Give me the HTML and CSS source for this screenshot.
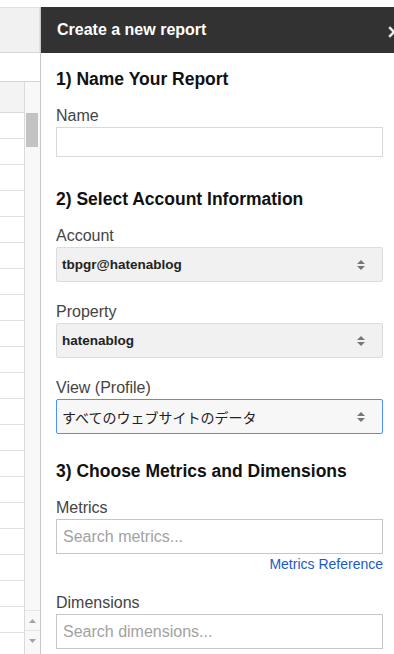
FILE: index.html
```html
<!DOCTYPE html>
<html lang="en">
<head>
  <meta charset="UTF-8">
  <meta name="viewport" content="width=device-width, initial-scale=1.0">
  <title>Create a new report</title>
  <link rel="stylesheet" href="styles.css">
</head>
<body>
  <div class="app">
    <!-- hoja de cálculo detrás del panel -->
    <div class="sheet">
      <div class="toolbar"></div>
      <div class="formula"></div>
      <div class="grid">
        <div class="cells">
          <div class="corner"></div>
          <div class="row"></div><div class="row"></div><div class="row"></div>
          <div class="row"></div><div class="row"></div><div class="row"></div>
          <div class="row"></div><div class="row"></div><div class="row"></div>
          <div class="row"></div><div class="row"></div><div class="row"></div>
          <div class="row"></div><div class="row"></div><div class="row"></div>
          <div class="row"></div><div class="row"></div><div class="row"></div>
          <div class="row"></div><div class="row"></div><div class="row"></div>
        </div>
        <div class="vscroll">
          <div class="thumb"></div>
          <div class="arrows">
            <div class="arrow">
              <svg width="7" height="4" viewBox="0 0 7 4"><polygon points="0,4 3.5,0 7,4" fill="#a3a3a3"/></svg>
            </div>
            <div class="arrow">
              <svg width="7" height="4" viewBox="0 0 7 4"><polygon points="0,0 3.5,4 7,0" fill="#a3a3a3"/></svg>
            </div>
          </div>
        </div>
      </div>
    </div>

    <!-- panel lateral -->
    <aside class="sidebar">
      <header class="sidebar-head">
        <span>Create a new report</span>
        <svg class="close" width="12" height="12" viewBox="0 0 12 12">
          <path d="M1.2 1.2 L10.8 10.8 M10.8 1.2 L1.2 10.8" stroke="#ececec" stroke-width="2.6" fill="none"/>
        </svg>
      </header>

      <div class="sidebar-body">
        <section class="section">
          <h2>1) Name Your Report</h2>
          <div class="label">Name</div>
          <input class="text-input" type="text">
        </section>

        <section class="section section-account">
          <h2>2) Select Account Information</h2>
          <div class="field">
            <div class="label">Account</div>
            <div class="select">
              <span>tbpgr@hatenablog</span>
              <svg width="8" height="10" viewBox="0 0 8 10"><polygon points="0,4 4,0 8,4" fill="#777"/><polygon points="0,6 4,10 8,6" fill="#777"/></svg>
            </div>
          </div>
          <div class="field">
            <div class="label">Property</div>
            <div class="select">
              <span>hatenablog</span>
              <svg width="8" height="10" viewBox="0 0 8 10"><polygon points="0,4 4,0 8,4" fill="#777"/><polygon points="0,6 4,10 8,6" fill="#777"/></svg>
            </div>
          </div>
          <div class="field">
            <div class="label">View (Profile)</div>
            <div class="select select-focus">
              <span>すべてのウェブサイトのデータ</span>
              <svg width="8" height="10" viewBox="0 0 8 10"><polygon points="0,4 4,0 8,4" fill="#777"/><polygon points="0,6 4,10 8,6" fill="#777"/></svg>
            </div>
          </div>
        </section>

        <section class="section section-metrics">
          <h2>3) Choose Metrics and Dimensions</h2>
          <div class="label">Metrics</div>
          <input class="text-input search-input" type="text" placeholder="Search metrics...">
          <div class="ref-link"><a href="#">Metrics Reference</a></div>
          <div class="field">
            <div class="label">Dimensions</div>
            <input class="text-input search-input" type="text" placeholder="Search dimensions...">
          </div>
        </section>
      </div>
    </aside>
  </div>
</body>
</html>
```

FILE: styles.css
```css
/* General */
* {
  box-sizing: border-box;
}

body {
  margin: 0;
  height: 654px;
  overflow: hidden;
  font-family: 'Liberation Sans', Arial, sans-serif;
  background-color: #ffffff;
  color: #222222;
}

.app {
  display: flex;
  height: 654px;
  padding-top: 7px;
}

/* Hoja de cálculo */
.sheet {
  flex: none;
  width: 40px;
  display: flex;
  flex-direction: column;
}

.toolbar {
  height: 46px;
  background-color: #f1f1f1;
  border-top: 1px solid #e0e0e0;
  border-bottom: 1px solid #d6d6d6;
  border-right: 1px solid #e0e0e0;
}

.formula {
  height: 28px;
}

.grid {
  flex: 1;
  display: flex;
  min-height: 0;
  overflow: hidden;
  border-top: 1px solid #d4d4d4;
}

.cells {
  width: 25px;
  border-right: 1px solid #dadada;
}

.corner {
  height: 31px;
  background-color: #f3f3f3;
  border-bottom: 1px solid #d9d9d9;
}

.row {
  height: 26px;
  border-bottom: 1px solid #e1e1e1;
}

.vscroll {
  width: 15px;
  display: flex;
  flex-direction: column;
  padding: 31px 0 4px;
  background-color: #f8f8f8;
}

.thumb {
  width: 12px;
  height: 34px;
  margin-left: 1px;
  background-color: #c3c3c3;
}

.arrows {
  margin-top: auto;
}

.arrow {
  height: 20px;
  display: flex;
  align-items: center;
  justify-content: center;
  border-top: 1px solid #e6e6e6;
}

/* Panel lateral */
.sidebar {
  flex: none;
  width: 358px;
  border-left: 1px solid #c8c8c8;
  background-color: #ffffff;
}

.sidebar-head {
  height: 46px;
  display: flex;
  align-items: center;
  justify-content: space-between;
  padding: 0 0 0 16px;
  background-color: #323232;
  color: #ffffff;
  font-size: 16px;
  font-weight: bold;
}

.close {
  display: block;
  margin: 4px -2px 0 0;
}

.sidebar-body {
  padding: 16px 15px 0;
}

.section-account {
  margin-top: 32px;
}

.section-metrics {
  margin-top: 27px;
}

h2 {
  margin: 0 0 17px;
  font-size: 17.5px;
  line-height: 20px;
  color: #111111;
}

.label {
  font-size: 16px;
  line-height: 19px;
  padding-bottom: 2px;
  color: #444444;
}

.field + .field {
  margin-top: 20px;
}

.text-input {
  display: block;
  width: 100%;
  height: 30px;
  margin: 0;
  padding: 0 6px;
  border: 1px solid #d9d9d9;
  border-radius: 0;
  font-family: inherit;
  font-size: 16px;
  color: #222222;
  outline: none;
}

.search-input {
  height: 35px;
  border-color: #c6c6c6;
}

.text-input::placeholder {
  color: #a2a2a2;
}

.select {
  height: 35px;
  display: flex;
  align-items: center;
  justify-content: space-between;
  padding: 0 17px 0 5px;
  border: 1px solid #dcdcdc;
  border-radius: 2px;
  background-color: #f1f1f1;
  font-size: 13.5px;
  font-weight: bold;
  color: #222222;
}

.select-focus {
  border-color: #4d90fe;
  background-color: #f7f7f7;
  font-family: 'Liberation Sans', 'Noto Sans CJK JP', sans-serif;
  font-size: 14px;
  font-weight: normal;
}

.ref-link {
  margin-top: 2px;
  text-align: right;
  font-size: 14px;
  line-height: 16px;
}

.ref-link a {
  color: #1a5bc4;
  text-decoration: none;
}

.ref-link + .field {
  margin-top: 21px;
}
```
